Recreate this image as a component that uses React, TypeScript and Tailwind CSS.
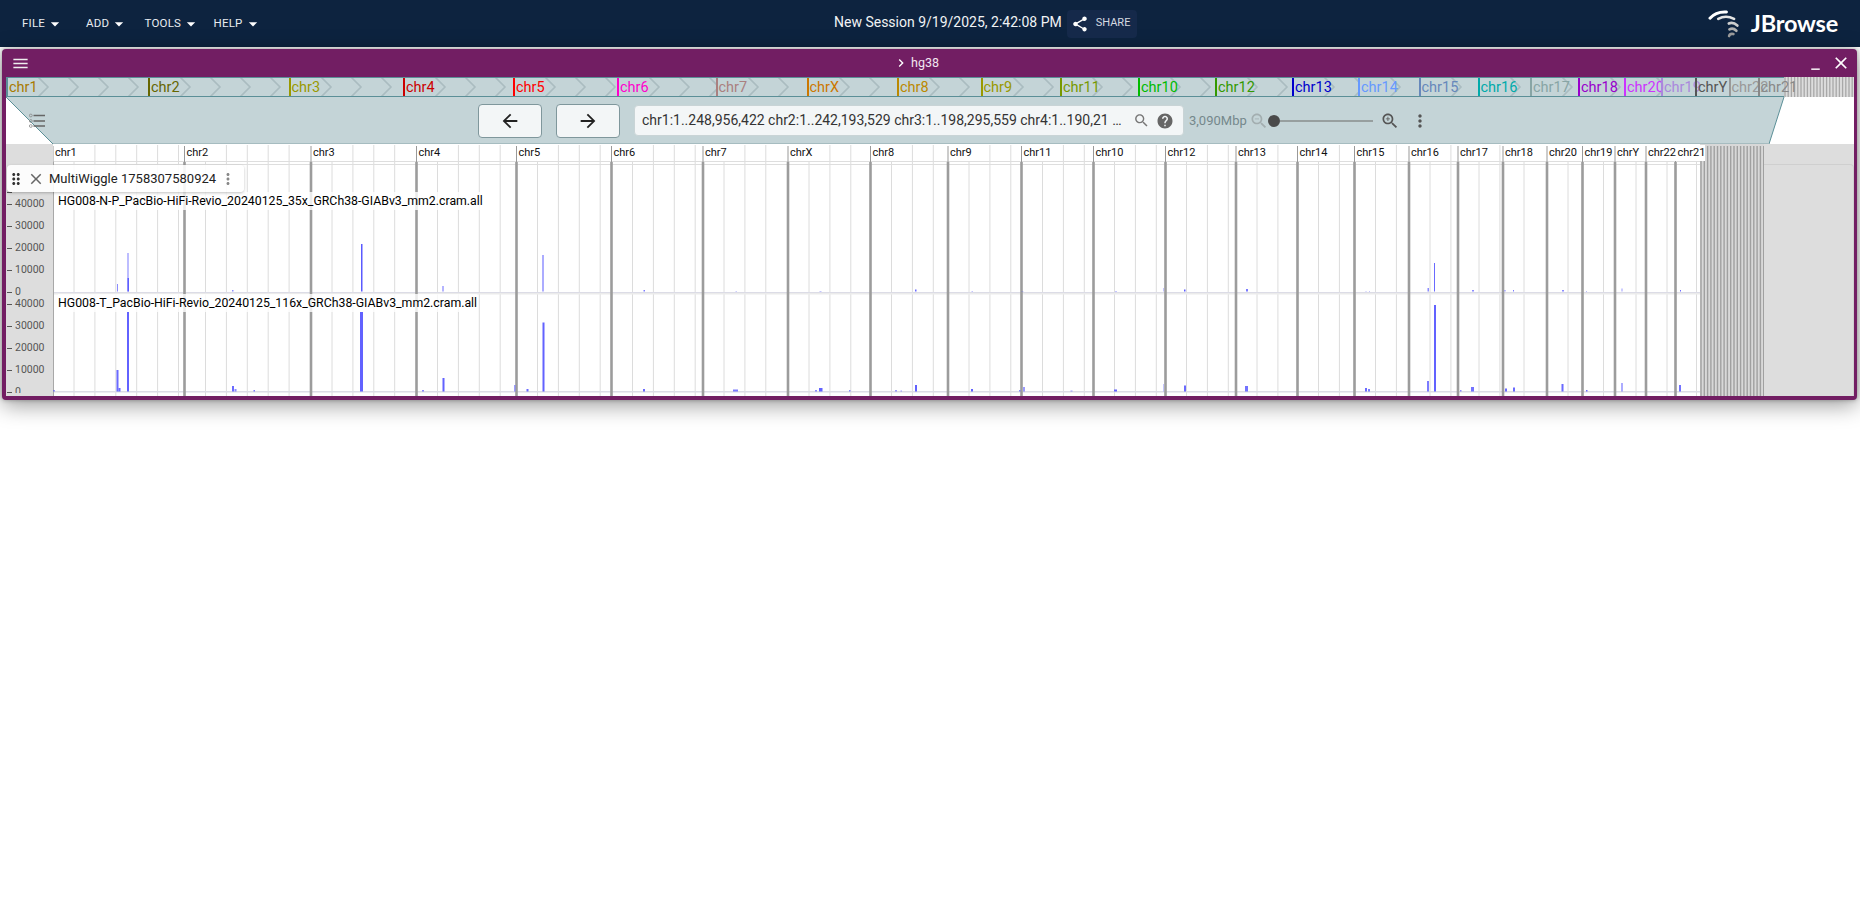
import type { ReactNode } from "react"

const ARROW_DROP = "M7 10l5 5 5-5z"
const MENU = "M3 18h18v-2H3v2zm0-5h18v-2H3v2zm0-7v2h18V6H3z"
const CLOSE = "M19 6.41 17.59 5 12 10.59 6.41 5 5 6.41 10.59 12 5 17.59 6.41 19 12 13.41 17.59 19 19 17.59 13.41 12z"
const SHARE =
  "M18 16.08c-.76 0-1.44.3-1.96.77L8.91 12.7c.05-.23.09-.46.09-.7s-.04-.47-.09-.7l7.05-4.11c.54.5 1.25.81 2.04.81 1.66 0 3-1.34 3-3s-1.34-3-3-3-3 1.34-3 3c0 .24.04.47.09.7L8.04 9.81C7.5 9.31 6.79 9 6 9c-1.66 0-3 1.34-3 3s1.34 3 3 3c.79 0 1.5-.31 2.04-.81l7.12 4.16c-.05.21-.08.43-.08.65 0 1.61 1.31 2.92 2.92 2.92s2.92-1.31 2.92-2.92-1.31-2.92-2.92-2.92z"
const SEARCH =
  "M15.5 14h-.79l-.28-.27C15.41 12.59 16 11.11 16 9.5 16 5.91 13.09 3 9.5 3S3 5.91 3 9.5 5.91 16 9.5 16c1.61 0 3.09-.59 4.23-1.57l.27.28v.79l5 4.99L20.49 19l-4.99-5zm-6 0C7.01 14 5 11.99 5 9.5S7.01 5 9.5 5 14 7.01 14 9.5 11.99 14 9.5 14z"
const HELP =
  "M12 2C6.48 2 2 6.48 2 12s4.48 10 10 10 10-4.48 10-10S17.52 2 12 2zm1 17h-2v-2h2v2zm2.07-7.75-.9.92C13.45 12.9 13 13.5 13 15h-2v-.5c0-1.1.45-2.1 1.17-2.83l1.24-1.26c.37-.36.59-.86.59-1.41 0-1.1-.9-2-2-2s-2 .9-2 2H8c0-2.21 1.79-4 4-4s4 1.79 4 4c0 .88-.36 1.68-.93 2.25z"
const MORE =
  "M12 8c1.1 0 2-.9 2-2s-.9-2-2-2-2 .9-2 2 .9 2 2 2zm0 2c-1.1 0-2 .9-2 2s.9 2 2 2 2-.9 2-2-.9-2-2-2zm0 6c-1.1 0-2 .9-2 2s.9 2 2 2 2-.9 2-2-.9-2-2-2z"
const DRAG =
  "M11 18c0 1.1-.9 2-2 2s-2-.9-2-2 .9-2 2-2 2 .9 2 2zm-2-8c-1.1 0-2 .9-2 2s.9 2 2 2 2-.9 2-2-.9-2-2-2zm0-6c-1.1 0-2 .9-2 2s.9 2 2 2 2-.9 2-2-.9-2-2-2zm6 4c1.1 0 2-.9 2-2s-.9-2-2-2-2 .9-2 2 .9 2 2 2zm0 2c-1.1 0-2 .9-2 2s.9 2 2 2 2-.9 2-2-.9-2-2-2zm0 6c-1.1 0-2 .9-2 2s.9 2 2 2 2-.9 2-2-.9-2-2-2z"
const BACK = "M20 11H7.83l5.59-5.59L12 4l-8 8 8 8 1.41-1.41L7.83 13H20v-2z"
const FORWARD = "M12 4l-1.41 1.41L16.17 11H4v2h12.17l-5.58 5.59L12 20l8-8z"
const CHEVRON = "M10 6 8.59 7.41 13.17 12l-4.58 4.59L10 18l6-6z"

// overview strip: [name, start x, colour]
const overview: [string, number, string][] = [
  ["chr1", 6, "#a87a00"],
  ["chr2", 148, "#666600"],
  ["chr3", 288.5, "#999900"],
  ["chr4", 403, "#cc0000"],
  ["chr5", 513, "#ff0000"],
  ["chr6", 617, "#ff00cc"],
  ["chr7", 715.5, "#aa8080"],
  ["chrX", 806.5, "#cc7700"],
  ["chr8", 897, "#bb8800"],
  ["chr9", 980.5, "#999900"],
  ["chr11", 1060, "#779900"],
  ["chr10", 1138, "#00bb00"],
  ["chr12", 1215, "#339900"],
  ["chr13", 1292, "#0000cc"],
  ["chr14", 1358, "#6699ff"],
  ["chr15", 1418.5, "#6688bb"],
  ["chr16", 1477.5, "#00aaaa"],
  ["chr17", 1530, "#88a5a5"],
  ["chr18", 1578, "#9900cc"],
  ["chr20", 1624, "#cc33ff"],
  ["chr19", 1661, "#aa88dd"],
  ["chrY", 1695, "#555555"],
  ["chr22", 1728.5, "#999999"],
  ["chr21", 1757.5, "#888888"],
]
const OVERVIEW_END = 1784

// main view blocks: [name, start x]
const blocks: [string, number][] = [
  ["chr1", 53],
  ["chr2", 184.5],
  ["chr3", 311],
  ["chr4", 416.5],
  ["chr5", 516.5],
  ["chr6", 611.5],
  ["chr7", 703],
  ["chrX", 788],
  ["chr8", 870.5],
  ["chr9", 948],
  ["chr11", 1021.5],
  ["chr10", 1093.5],
  ["chr12", 1165.5],
  ["chr13", 1236],
  ["chr14", 1297.5],
  ["chr15", 1354.5],
  ["chr16", 1409],
  ["chr17", 1458],
  ["chr18", 1503],
  ["chr20", 1547],
  ["chr19", 1582.5],
  ["chrY", 1615],
  ["chr22", 1646],
  ["chr21", 1675.5],
]
const BLOCKS_END = 1700
const UNPLACED_END = 1764

// coverage spikes: [x, top y, width, opacity]
const track1: number[][] = [
  [117, 284, 1, 0.7],
  [127.5, 253, 1, 0.8],
  [127.5, 278, 1.5, 0.95],
  [232, 290, 1.5, 0.7],
  [361, 244, 1.5, 1],
  [442.5, 286, 1, 0.9],
  [542.5, 255, 1, 1],
  [643.5, 290, 1.5, 0.8],
  [735.5, 291, 1.5, 0.6],
  [819.5, 291, 2, 0.7],
  [915, 289.5, 1.5, 0.9],
  [971.5, 291, 1.5, 0.7],
  [1021.5, 291, 2, 0.5],
  [1115, 291, 2, 0.7],
  [1163, 288, 1, 0.35],
  [1184, 289.5, 1.5, 1],
  [1246, 289, 2, 0.8],
  [1365.5, 291, 1, 0.7],
  [1369, 291, 1, 0.7],
  [1427.5, 288, 1.5, 0.7],
  [1434, 263, 1, 0.9],
  [1472, 290, 2, 0.7],
  [1504.5, 290, 1, 0.8],
  [1513, 290, 1, 0.8],
  [1562, 290, 2, 0.7],
  [1586, 291, 1, 0.8],
  [1621.5, 288.5, 1, 0.6],
  [1680, 290, 1, 0.9],
]
const track2: number[][] = [
  [53, 390, 2, 0.6],
  [116.5, 370, 2, 0.9],
  [118.5, 388, 2, 0.9],
  [127, 312, 2, 0.95],
  [232, 386, 2, 0.9],
  [234.5, 389, 2, 0.7],
  [253.5, 390, 1.5, 0.8],
  [360, 312, 3, 0.95],
  [422, 390, 2, 0.7],
  [442.5, 378, 2, 0.95],
  [514, 385, 1.5, 0.6],
  [526.5, 389, 2, 0.9],
  [542.5, 322.5, 2, 0.95],
  [643, 389, 2, 0.9],
  [733, 389.5, 5, 0.8],
  [815, 390, 2, 0.7],
  [819, 388, 3.5, 0.95],
  [849, 390, 1.5, 0.7],
  [895, 390, 2, 0.6],
  [900.5, 390.5, 1.5, 0.6],
  [915, 385, 2, 0.95],
  [971, 389, 2, 0.95],
  [1019, 390, 1.5, 0.7],
  [1023, 387, 2, 0.6],
  [1070.5, 390.5, 2, 0.6],
  [1114, 389.5, 3, 0.95],
  [1163, 384, 1, 0.35],
  [1184, 385.5, 2, 0.9],
  [1245, 386, 3, 0.85],
  [1365, 388, 2, 0.9],
  [1368, 389, 2, 0.8],
  [1427, 381, 2, 0.8],
  [1434, 305, 2, 0.95],
  [1460, 390, 1.5, 0.7],
  [1471, 387, 3, 0.85],
  [1505, 388.5, 2, 0.9],
  [1513, 387.5, 2, 0.9],
  [1561.5, 384, 2, 0.9],
  [1586, 390, 1.5, 0.9],
  [1621, 383, 2, 0.5],
  [1679, 385, 2, 0.85],
]

const AXIS = ["40000", "30000", "20000", "10000", "0"]
const CHART_X = 53
const CHART_Y = 144

function Icon({ d, size, className }: { d: string | string[]; size: number; className?: string }) {
  const paths = Array.isArray(d) ? d : [d]
  return (
    <svg viewBox="0 0 24 24" width={size} height={size} fill="currentColor" className={`shrink-0 ${className ?? ""}`}>
      {paths.map((p) => (
        <path key={p} d={p} />
      ))}
    </svg>
  )
}

function MenuButton({ label, width }: { label: string; width: number }) {
  return (
    <div className="flex items-center text-[11.5px] tracking-[0.2px] text-[#e8ecf0]" style={{ width }}>
      <span>{label}</span>
      <Icon d={ARROW_DROP} size={20} className="text-white" />
    </div>
  )
}

function Logo() {
  return (
    <div className="flex items-center">
      <svg viewBox="50 20 100 95" width="33" height="32" fill="none" strokeLinecap="round" className="mr-[10px]">
        <path d="M56 50 Q74 29 106 31" stroke="#ffffff" strokeWidth="9" />
        <path d="M81 52 Q104 39 129 52" stroke="#e4e4e4" strokeWidth="8" />
        <path d="M113 66 Q126 60 139 72" stroke="#cfcfcf" strokeWidth="8" />
        <path d="M115 84 Q126 78 136 88" stroke="#b0b0b0" strokeWidth="8" />
        <path d="M114 104 Q116 96 127 98" stroke="#999999" strokeWidth="8" />
      </svg>
      <span className="font-['Lato',sans-serif] text-[23.5px] font-bold leading-none tracking-[-0.2px] text-white">JBrowse</span>
    </div>
  )
}

function TopBar() {
  return (
    <div className="flex h-[47px] items-center bg-[#0d233f] pl-[22px] pr-[22px]">
      <div className="flex w-[812px] items-center">
        <MenuButton label="FILE" width={64} />
        <MenuButton label="ADD" width={58.5} />
        <MenuButton label="TOOLS" width={69} />
        <MenuButton label="HELP" width={60} />
      </div>
      <span className="mt-[-2px] text-[14px] text-[#f1f3f5]">New Session 9/19/2025, 2:42:08 PM</span>
      <div className="ml-[5px] flex h-[28px] w-[70px] items-center rounded bg-[#15294a] pl-[4px] text-[11px] text-[#d5dae0]">
        <Icon d={SHARE} size={18} className="text-white" />
        <span className="ml-[7px]">SHARE</span>
      </div>
      <div className="ml-auto">
        <Logo />
      </div>
    </div>
  )
}

function WindowHeader() {
  return (
    <div className="flex h-[28px] items-center text-white">
      <Icon d={MENU} size={19} className="ml-[5px] text-[#eee]" />
      <div className="ml-[863px] flex items-center">
        <Icon d={CHEVRON} size={16} />
        <span className="ml-[2px] text-[12.5px] text-[#f2e6f0]">hg38</span>
      </div>
      <div className="ml-auto mr-[3px] flex items-center gap-[7px]">
        <Icon d="M6 19h12v2H6z" size={17} />
        <Icon d={CLOSE} size={20} />
      </div>
    </div>
  )
}

function Hatch({ width, height, step, color }: { width: number; height: number; step: number; color: string }) {
  const lines = []
  for (let x = 1; x < width; x += step) {
    lines.push(<line key={x} x1={x} x2={x} y1={0} y2={height} stroke={color} strokeWidth={1.3} />)
  }
  return (
    <svg width={width} height={height} className="block shrink-0">
      {lines}
    </svg>
  )
}

function OverviewBlock({ name, width, color, edge }: { name: string; width: number; color: string; edge: string }) {
  const tips = []
  for (let x = 42; x < width + 8; x += 30) tips.push(x)
  return (
    <div className="relative h-full shrink-0 overflow-visible border-l-2 leading-[18px]" style={{ width, borderColor: edge }}>
      <svg width={width} height={18} className="absolute left-[-2px] top-0" fill="none">
        {tips.map((x) => (
          <path key={x} d={`M${x - 10} -1L${x} 9L${x - 10} 19`} stroke="#aabcc0" strokeWidth={1.6} />
        ))}
      </svg>
      <span className="relative pl-px text-[14.5px]" style={{ color }}>
        {name}
      </span>
    </div>
  )
}

function OverviewStrip() {
  return (
    <div className="flex h-[20px] bg-[#c4d4d7]">
      <div className="flex h-full w-[1778px] border-y border-[#5b8f97]">
        {overview.map(([name, x, color], i) => {
          const next = i + 1 < overview.length ? overview[i + 1][1] : OVERVIEW_END
          return <OverviewBlock key={name} name={name} width={next - x} color={color} edge={name === "chr1" ? "#5b8f97" : color} />
        })}
      </div>
      <div className="flex-1 bg-[#dddddd]">
        <Hatch width={70} height={20} step={3.2} color="#a8a8a8" />
      </div>
    </div>
  )
}

function ToolbarButton({ d, className }: { d: string; className: string }) {
  return (
    <div className={`flex h-[34px] w-[64px] items-center justify-center rounded border border-[#7f979c] bg-[#f3f6f7] text-[#222] ${className}`}>
      <Icon d={d} size={22} />
    </div>
  )
}

function TrackSelectorIcon() {
  return (
    <svg width="16" height="16" viewBox="0 0 16 16" fill="none" className="ml-[23px] shrink-0">
      <circle cx="1.8" cy="2.5" r="1.4" stroke="#888" strokeWidth="0.8" />
      <circle cx="1.8" cy="8" r="1.4" stroke="#888" strokeWidth="0.8" />
      <circle cx="1.8" cy="13" r="1.4" stroke="#888" strokeWidth="0.8" />
      <path d="M4.5 2.5H16M4.5 8H16M4.5 13H16" stroke="#666" strokeWidth="1.5" />
    </svg>
  )
}

function Toolbar() {
  return (
    <div className="relative h-[47px] bg-white">
      <svg width="1848" height="47" className="absolute left-0 top-0">
        <path d="M0 0H1778L1763 47H47Z" fill="#c4d4d7" />
        <path d="M0 0L47 47M1778 0L1763 47" stroke="#5b8f97" strokeWidth="1" fill="none" />
        <path d="M47 46.5H1763" stroke="#a6bcc0" strokeWidth="1" />
      </svg>
      <div className="relative flex h-full items-center">
        <TrackSelectorIcon />
        <ToolbarButton d={BACK} className="ml-[433px]" />
        <ToolbarButton d={FORWARD} className="ml-[14px]" />
        <div className="ml-[14px] flex h-[31px] w-[550px] items-center rounded border border-[#c9d4d6] bg-[#f3f6f7] pl-[7px]">
          <span className="w-[479px] overflow-hidden whitespace-nowrap text-[14px] text-[#333]">
            chr1:1..248,956,422 chr2:1..242,193,529 chr3:1..198,295,559 chr4:1..190,21 …
          </span>
          <Icon d={SEARCH} size={17} className="ml-[12px] text-[#777]" />
          <Icon d={HELP} size={18} className="ml-[6px] text-[#666]" />
        </div>
        <span className="ml-[5px] text-[13px] text-[#75888c]">3,090Mbp</span>
        <Icon d={[SEARCH, "M7 9h5v1H7z"]} size={20} className="ml-[2px] text-[#a3aeb0]" />
        <div className="flex w-[113px] items-center">
          <div className="ml-[-1px] h-[12px] w-[12px] shrink-0 rounded-full bg-[#4a4a4a]" />
          <div className="h-[2px] w-[93px] bg-[#979f9f]" />
        </div>
        <Icon d={[SEARCH, "M12 10h-2v2H9v-2H7V9h2V7h1v2h2v1z"]} size={20} className="ml-[-2px] text-[#555]" />
        <Icon d={MORE} size={20} className="ml-[10px] text-[#555]" />
      </div>
    </div>
  )
}

function AxisColumn() {
  const row = (label: string) => (
    <div key={label} className="flex h-[22px] shrink-0 items-center">
      <span className="ml-px h-px w-[5px] bg-[#555]" />
      <span className="ml-[3px] text-[10.5px] text-[#555]">{label}</span>
    </div>
  )
  return (
    <div className="flex w-[47px] shrink-0 flex-col bg-[#dddddd]">
      <div className="h-[48px] shrink-0" />
      <span className="ml-px h-px w-[5px] shrink-0 bg-[#555]" />
      <div className="flex h-[100px] shrink-0 flex-col">{AXIS.map(row)}</div>
      <div className="relative flex h-[100px] shrink-0 flex-col overflow-hidden">{AXIS.map(row)}</div>
    </div>
  )
}

function CoverageChart() {
  const width = UNPLACED_END - CHART_X
  const height = 252
  const minor: number[] = []
  blocks.forEach(([, start], i) => {
    const end = i + 1 < blocks.length ? blocks[i + 1][1] : BLOCKS_END
    for (let x = start + 21; x < end - 3; x += 20.9) minor.push(x)
  })
  const bars = (data: number[][], base: number) =>
    data.map(([x, top, w, op]) => (
      <rect key={`${base}-${x}-${top}`} x={x - CHART_X} y={top - CHART_Y} width={w} height={base - top} fill="#5a5aff" opacity={op} />
    ))
  return (
    <svg width={width} height={height} className="absolute left-0 top-0">
      <rect width={width} height={height} fill="#fff" />
      {minor.map((x) => (
        <line key={x} x1={x - CHART_X} x2={x - CHART_X} y1={1} y2={height} stroke="#dcdcdc" strokeWidth={1} />
      ))}
      <line x1={0} x2={width} y1={17.5} y2={17.5} stroke="#dedede" />
      <line x1={0} x2={width} y1={20.5} y2={20.5} stroke="#dedede" />
      <rect x={0} y={148} width={width} height={1.5} fill="#dcdce6" />
      <rect x={0} y={149} width={width} height={1.5} fill="#ebebeb" />
      <rect x={0} y={247} width={width} height={1.5} fill="#dcdce6" />
      {blocks.map(([name, x]) => (
        <g key={name}>
          <line x1={x - CHART_X} x2={x - CHART_X} y1={2} y2={18} stroke="#999" strokeWidth={1} />
          {x > CHART_X && <line x1={x - CHART_X} x2={x - CHART_X} y1={18} y2={height} stroke="#9c9c9c" strokeWidth={2.6} />}
        </g>
      ))}
      <line x1={0.5} x2={0.5} y1={18} y2={height} stroke="#a8a8a8" strokeWidth={1} />
      <rect x={BLOCKS_END - CHART_X} y={0} width={UNPLACED_END - BLOCKS_END} height={height} fill="#d8d8d8" />
      {Array.from({ length: 20 }, (_, i) => BLOCKS_END - CHART_X + 1 + i * 3.3).map((x) => (
        <line key={x} x1={x} x2={x} y1={2} y2={height} stroke="#a0a0a0" strokeWidth={1.4} />
      ))}
      {bars(track1, 291.5)}
      {bars(track2, 391.5)}
    </svg>
  )
}

function RulerLabels() {
  return (
    <div className="relative flex h-[17px] items-start pt-px">
      {blocks.map(([name, x], i) => {
        const next = i + 1 < blocks.length ? blocks[i + 1][1] : BLOCKS_END
        return (
          <div key={name} className="shrink-0" style={{ width: next - x }}>
            <span className="ml-[2px] block w-fit whitespace-nowrap bg-white text-[11px] leading-[16px] text-[#111]">{name}</span>
          </div>
        )
      })}
    </div>
  )
}

function TrackLabel({ children, className }: { children: ReactNode; className: string }) {
  return <div className={`absolute left-[5px] h-[18px] whitespace-nowrap bg-white/80 text-[12.3px] leading-[18px] text-black ${className}`}>{children}</div>
}

function FloatingLabel() {
  return (
    <div className="absolute left-[1px] top-[21px] z-10 flex h-[27px] w-[237px] items-center rounded bg-white/90 text-[#222] shadow-[0_1px_3px_rgba(0,0,0,0.25)]">
      <Icon d={DRAG} size={18} className="text-[#333]" />
      <Icon d={CLOSE} size={18} className="ml-[2px] text-[#666]" />
      <span className="ml-[4px] text-[13px] tracking-[0.02px]">MultiWiggle 1758307580924</span>
      <Icon d={MORE} size={18} className="ml-[3px] text-[#888]" />
    </div>
  )
}

function TracksArea() {
  return (
    <div className="relative flex h-[252px] overflow-hidden">
      <FloatingLabel />
      <AxisColumn />
      <div className="relative w-[1711px] shrink-0">
        <CoverageChart />
        <RulerLabels />
        <TrackLabel className="top-[48px]">HG008-N-P_PacBio-HiFi-Revio_20240125_35x_GRCh38-GIABv3_mm2.cram.all</TrackLabel>
        <TrackLabel className="top-[150px]">HG008-T_PacBio-HiFi-Revio_20240125_116x_GRCh38-GIABv3_mm2.cram.all</TrackLabel>
      </div>
      <div className="flex-1 bg-[#dddddd] pt-[20px]">
        <div className="h-full rounded-tr border-r border-t border-[#cfcfcf]" />
      </div>
    </div>
  )
}

export default function App() {
  return (
    <div className="min-h-[920px] bg-white font-['Roboto',sans-serif]">
      <TopBar />
      <div className="ml-[2px] mt-[2px] w-[1855px] rounded bg-[#721e63] pb-[4px] pl-[4px] pr-[3px] shadow-[0_5px_22px_rgba(0,0,0,0.4),0_0_4px_rgba(0,0,0,0.3)]">
        <WindowHeader />
        <OverviewStrip />
        <Toolbar />
        <TracksArea />
      </div>
    </div>
  )
}
